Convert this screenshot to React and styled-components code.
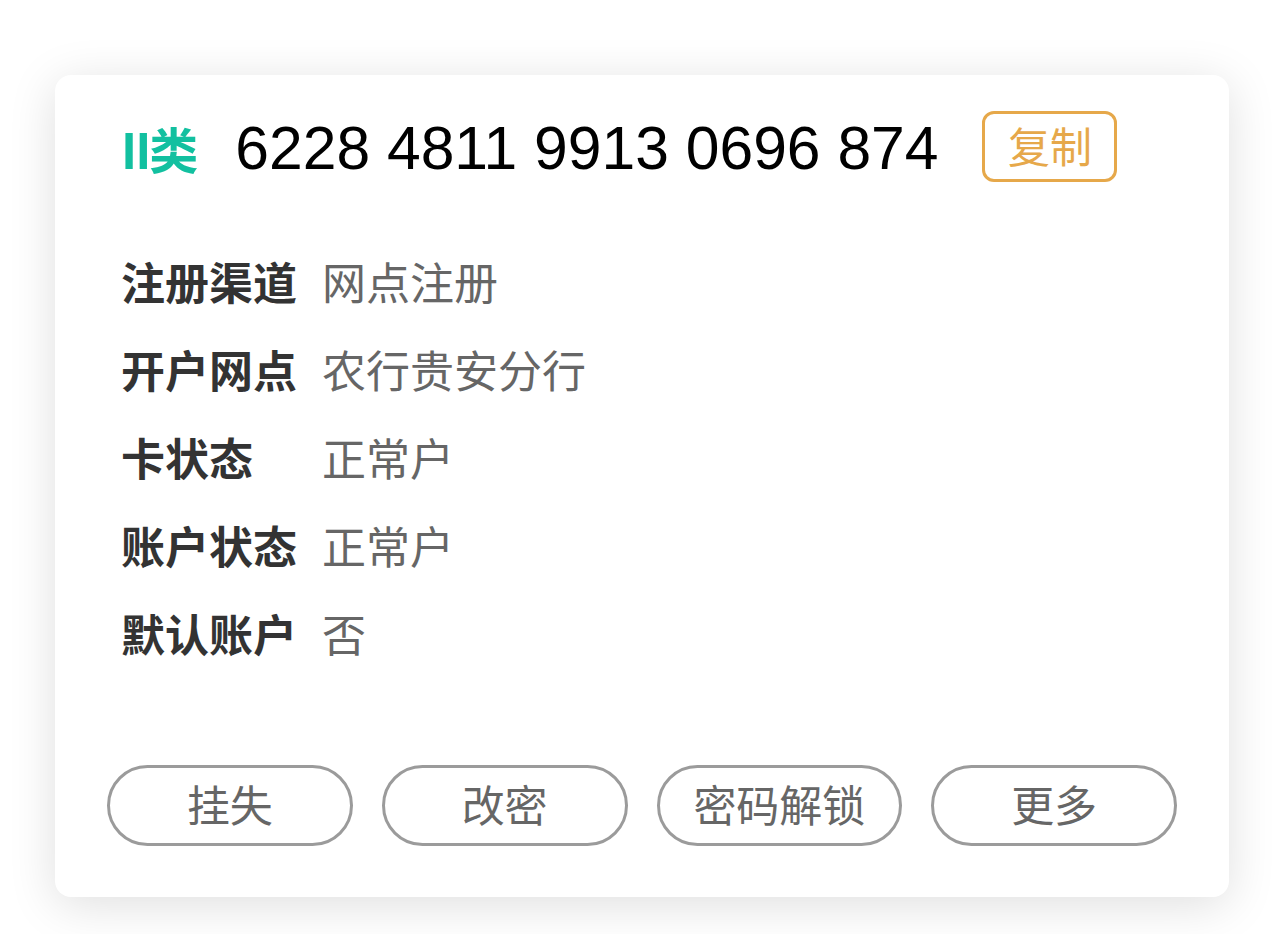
import React from "react";
import styled, { createGlobalStyle } from "styled-components";

const Global = createGlobalStyle`
  html, body { margin: 0; padding: 0; background: #ffffff; }
  body { font-family: "Noto Sans CJK SC", "Liberation Sans", sans-serif; }
`;

const Page = styled.div`
  padding: 75px 55px 37px 55px;
  width: 1284px;
  box-sizing: border-box;
`;

const Card = styled.div`
  background: #fff;
  border-radius: 16px;
  box-shadow: 0 8px 48px rgba(0, 0, 0, 0.13);
  padding: 36px 52px 51px 52px;
  height: 822px;
  box-sizing: border-box;
  display: flex;
  flex-direction: column;
`;

const Header = styled.div`
  display: flex;
  align-items: center;
  height: 71px;
  padding-left: 14px;
`;

const Kind = styled.span`
  font-family: "Noto Sans CJK SC", sans-serif;
  font-weight: 700;
  font-size: 49px;
  color: #12c0a0;
  letter-spacing: -2px;
  line-height: 1;
  padding-top: 2px;
`;

const CardNo = styled.span`
  font-family: "Liberation Sans", "Helvetica", sans-serif;
  font-size: 60.6px;
  color: #000;
  margin-left: 39px;
  line-height: 1;
  padding-top: 4px;
`;

const CopyButton = styled.button`
  margin-left: 44px;
  height: 71px;
  width: 135px;
  box-sizing: border-box;
  border: 3px solid #e6a84a;
  border-radius: 12px;
  background: #fff;
  color: #e6a84a;
  font-family: "Noto Sans CJK SC", sans-serif;
  font-size: 42px;
  padding: 0 0 3px 0;
  line-height: 1;
  display: flex;
  align-items: center;
  justify-content: center;
`;

const Info = styled.div`
  margin-top: 55px;
  padding-left: 14px;
  display: flex;
  flex-direction: column;
`;

const Row = styled.div`
  display: flex;
  align-items: center;
  height: 88px;
  font-size: 44px;
  line-height: 1;
`;

const Label = styled.span`
  width: 176px;
  margin-right: 25px;
  font-weight: 700;
  color: #333;
  white-space: nowrap;
`;

const Value = styled.span`
  color: #666;
  white-space: nowrap;
`;

const Actions = styled.div`
  margin-top: auto;
  display: grid;
  grid-template-columns: repeat(4, 1fr);
  column-gap: 29px;
`;

const Action = styled.button`
  height: 81px;
  box-sizing: border-box;
  border: 3px solid #9b9b9b;
  border-radius: 41px;
  background: #fff;
  color: #666;
  font-family: "Noto Sans CJK SC", sans-serif;
  font-size: 43px;
  padding: 0 0 4px 0;
  line-height: 1;
  display: flex;
  align-items: center;
  justify-content: center;
`;

const rows = [
  ["注册渠道", "网点注册"],
  ["开户网点", "农行贵安分行"],
  ["卡状态", "正常户"],
  ["账户状态", "正常户"],
  ["默认账户", "否"],
];

const actions = ["挂失", "改密", "密码解锁", "更多"];

export default function App() {
  return (
    <>
      <Global />
      <Page>
        <Card>
          <Header>
            <Kind>II类</Kind>
            <CardNo>6228 4811 9913 0696 874</CardNo>
            <CopyButton>复制</CopyButton>
          </Header>
          <Info>
            {rows.map(([k, v]) => (
              <Row key={k}>
                <Label>{k}</Label>
                <Value>{v}</Value>
              </Row>
            ))}
          </Info>
          <Actions>
            {actions.map((a) => (
              <Action key={a}>{a}</Action>
            ))}
          </Actions>
        </Card>
      </Page>
    </>
  );
}
